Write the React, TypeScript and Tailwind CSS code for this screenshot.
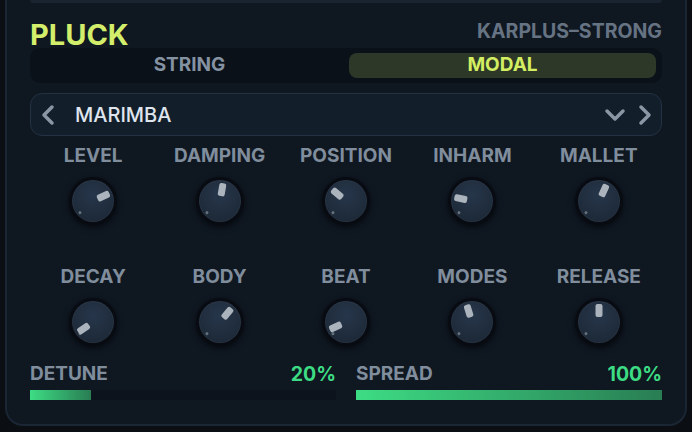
import React from "react";

const FONT = { fontFamily: "Inter, 'Noto Sans', 'Liberation Sans', sans-serif" };

type KnobSpec = { label: string; angle: number };

const ROW_ONE: KnobSpec[] = [
  { label: "LEVEL", angle: 65 },
  { label: "DAMPING", angle: 10 },
  { label: "POSITION", angle: -50 },
  { label: "INHARM", angle: -78 },
  { label: "MALLET", angle: 25 },
];

const ROW_TWO: KnobSpec[] = [
  { label: "DECAY", angle: -125 },
  { label: "BODY", angle: 40 },
  { label: "BEAT", angle: -115 },
  { label: "MODES", angle: -17 },
  { label: "RELEASE", angle: 0 },
];

function Knob({ angle }: { angle: number }) {
  return (
    <div className="relative h-[48px] w-[48px] rounded-full bg-[#080c12] p-[3px] shadow-[0_2px_6px_rgba(0,0,0,0.6)]">
      <div className="h-full w-full rounded-full bg-[radial-gradient(circle_at_50%_35%,#26364a_0%,#1f2c3c_60%,#1a2531_100%)] shadow-[inset_0_0_0_1px_rgba(255,255,255,0.04)]" />
      <div className="absolute inset-0" style={{ transform: "rotate(-132deg)" }}>
        <div className="absolute left-1/2 top-[5px] h-[3px] w-[3px] -translate-x-1/2 rounded-full bg-[#65707b]" />
      </div>
      <div className="absolute inset-0" style={{ transform: `rotate(${angle}deg)` }}>
        <div className="absolute left-1/2 top-[6px] h-[13px] w-[7px] -translate-x-1/2 rounded-[2px] bg-[#abb3bc]" />
      </div>
    </div>
  );
}

function KnobRow({ items }: { items: KnobSpec[] }) {
  return (
    <div className="grid grid-cols-5">
      {items.map((k) => (
        <div key={k.label} className="flex flex-col items-center">
          <span className="text-[19px] font-bold leading-[22px] text-[#808d9c]">{k.label}</span>
          <div className="mt-[10px]">
            <Knob angle={k.angle} />
          </div>
        </div>
      ))}
    </div>
  );
}

function Slider({ label, value, pct }: { label: string; value: string; pct: number }) {
  return (
    <div className="flex flex-1 flex-col">
      <div className="flex items-center justify-between">
        <span className="text-[19px] font-bold leading-[22px] text-[#808d9c]">{label}</span>
        <span className="text-[19.5px] font-bold leading-[22px] text-[#3ddc84]">{value}</span>
      </div>
      <div className="mt-[5px] h-[10px] w-full bg-[#0c131c]">
        <div
          className="h-full bg-[linear-gradient(90deg,#3ddc84,#297d53)]"
          style={{ width: `${pct}%` }}
        />
      </div>
    </div>
  );
}

export default function App() {
  return (
    <div className="h-[432px] w-[692px] overflow-hidden bg-[#0b0e13] px-[5px]" style={FONT}>
      <div className="h-[426px] rounded-b-[18px] border-2 border-t-0 border-[#1b2634] bg-[#0f1721] px-[23px]">
        <div className="h-[3px] rounded-b-sm bg-[#1a2430]" />

        <div className="mt-[15px] flex items-start justify-between">
          <span className="text-[29px] font-bold leading-[34px] text-[#d3ee6a]">PLUCK</span>
          <span className="mt-[1px] text-[19.5px] font-bold leading-[24px] text-[#667383]">KARPLUS–STRONG</span>
        </div>

        <div className="mt-[-4px] flex h-[35px] gap-[6px] rounded-[10px] bg-[#0b1119] p-[5px] px-[6px]">
          <div className="flex flex-1 items-center justify-center text-[19px] font-bold text-[#8492a2]">STRING</div>
          <div className="flex flex-1 items-center justify-center rounded-[8px] bg-[#2e3828] text-[19px] font-bold text-[#d3ee62]">
            MODAL
          </div>
        </div>

        <div className="mt-[10px] flex h-[43px] items-center rounded-[12px] border-[1.5px] border-[#233142] bg-[#131e2b] pl-[9px] pr-[8px]">
          <svg width="16" height="22" viewBox="0 0 16 22" className="shrink-0">
            <polyline points="12,3 4,11 12,19" fill="none" stroke="#8a96a4" strokeWidth="3.5" strokeLinecap="round" strokeLinejoin="round" />
          </svg>
          <span className="ml-[19px] flex-1 text-[20px] font-medium text-[#dfe5ed]">MARIMBA</span>
          <svg width="22" height="16" viewBox="0 0 22 16" className="shrink-0">
            <polyline points="3,4 11,12 19,4" fill="none" stroke="#8a96a4" strokeWidth="3.5" strokeLinecap="round" strokeLinejoin="round" />
          </svg>
          <svg width="16" height="22" viewBox="0 0 16 22" className="ml-[11px] shrink-0">
            <polyline points="4,3 12,11 4,19" fill="none" stroke="#8a96a4" strokeWidth="3.5" strokeLinecap="round" strokeLinejoin="round" />
          </svg>
        </div>

        <div className="mt-[9px]">
          <KnobRow items={ROW_ONE} />
        </div>
        <div className="mt-[41px]">
          <KnobRow items={ROW_TWO} />
        </div>

        <div className="mt-[17px] flex gap-[20px]">
          <Slider label="DETUNE" value="20%" pct={20} />
          <Slider label="SPREAD" value="100%" pct={100} />
        </div>
      </div>
    </div>
  );
}
